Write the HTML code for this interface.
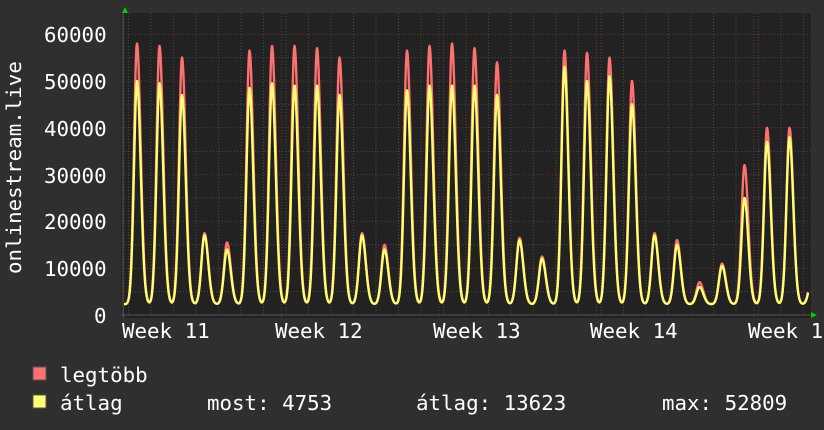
<!DOCTYPE html>
<html><head><meta charset="utf-8"><style>
html,body{margin:0;padding:0;background:#2f2f2f;}
svg{display:block}
text{font-family:"DejaVu Sans Mono","Liberation Mono",monospace;font-size:20.8px;fill:#fff}
</style></head><body>
<svg id="g" width="824" height="430" xmlns="http://www.w3.org/2000/svg">
<rect width="824" height="430" fill="#2f2f2f"/>
<rect x="121" y="13" width="690" height="305" fill="#222"/>
<g id="grid"></g>
<polyline id="red" fill="none" stroke="#ff7070" stroke-width="2.4" stroke-linejoin="round"/>
<polyline id="yel" fill="none" stroke="#ffff70" stroke-width="2.4" stroke-linejoin="round"/>
<line x1="121" y1="315" x2="812" y2="315" stroke="#555" stroke-width="1"/>
<line x1="123" y1="13" x2="123" y2="318" stroke="#555" stroke-width="1"/>
<polygon points="122,13 128,13 125,7" fill="#00cc00"/>
<polygon points="811,312 811,318 817,315" fill="#00cc00"/>
<text x="44" y="42">60000</text>
<text x="44" y="89">50000</text>
<text x="44" y="136">40000</text>
<text x="44" y="183">30000</text>
<text x="44" y="229">20000</text>
<text x="44" y="276">10000</text>
<text x="94" y="323">0</text>
<text transform="translate(21,274) rotate(-90)">onlinestream.live</text>
<text x="122" y="338">Week 11</text>
<text x="275" y="338">Week 12</text>
<text x="433" y="338">Week 13</text>
<text x="590" y="338">Week 14</text>
<text x="748" y="338">Week 15</text>
<rect x="33" y="367" width="13" height="13" fill="#ff7070" stroke="#555" stroke-width="1"/>
<text x="60" y="382">legtöbb</text>
<rect x="33" y="395" width="13" height="13" fill="#ffff70" stroke="#555" stroke-width="1"/>
<text x="60" y="410">átlag</text>
<text x="207" y="410">most: 4753</text>
<text x="416" y="410">átlag: 13623</text>
<text x="662" y="410">max: 52809</text>
</svg>
<script>
var ns="http://www.w3.org/2000/svg",g=document.getElementById('grid');
function ln(x1,y1,x2,y2,c){var l=document.createElementNS(ns,'line');l.setAttribute('x1',x1);l.setAttribute('y1',y1);l.setAttribute('x2',x2);l.setAttribute('y2',y2);l.setAttribute('stroke',c);l.setAttribute('stroke-dasharray','1,2');l.setAttribute('stroke-width','1');g.appendChild(l);}
var y0=315,k=46.8/10000;
for(var v=5000;v<=65000;v+=5000){var y=y0-v*k;if(y<14)break;ln(123,y,811,y,v%10000==0?'#6a3434':'#4a4a4a');}
for(var x=128.5;x<811;x+=22.5)ln(x,13,x,315,'#4a4a4a');
[124,281.5,439,596.5,754].forEach(function(x){ln(x,13,x,318,'#6a3434');});
var P=[[58,50],[57.5,49.5],[55,47],[17.5,17],[15.5,14],[56.5,48.5],[57.5,49.5],[57.5,49],[57,49],[55,47],[17.5,17],[15,14],[56.5,48],[57.5,49],[58,49],[57,49],[54,47],[16.5,16],[12.5,12],[56.5,53],[56,50],[55,51],[50,45],[17.5,17],[16,15],[7,6],[11,10.5],[32,25],[40,37],[40,38],[8.5,8]];
var r=[],ye=[];
for(var x=124;x<=808;x+=0.5){var vr=2.3,vy=2.3;
for(var i=0;i<P.length;i++){var c=137+i*22.5,d=x-c;var s=d<0?4.3:5.3;var f=Math.exp(-(d/s)*(d/s));vr+=(P[i][0]-2.3)*f;vy+=(P[i][1]-2.3)*f;}
r.push(x+','+(y0-vr*1000*k).toFixed(1));ye.push(x+','+(y0-vy*1000*k).toFixed(1));}
document.getElementById('red').setAttribute('points',r.join(' '));
document.getElementById('yel').setAttribute('points',ye.join(' '));
</script>
</body></html>
